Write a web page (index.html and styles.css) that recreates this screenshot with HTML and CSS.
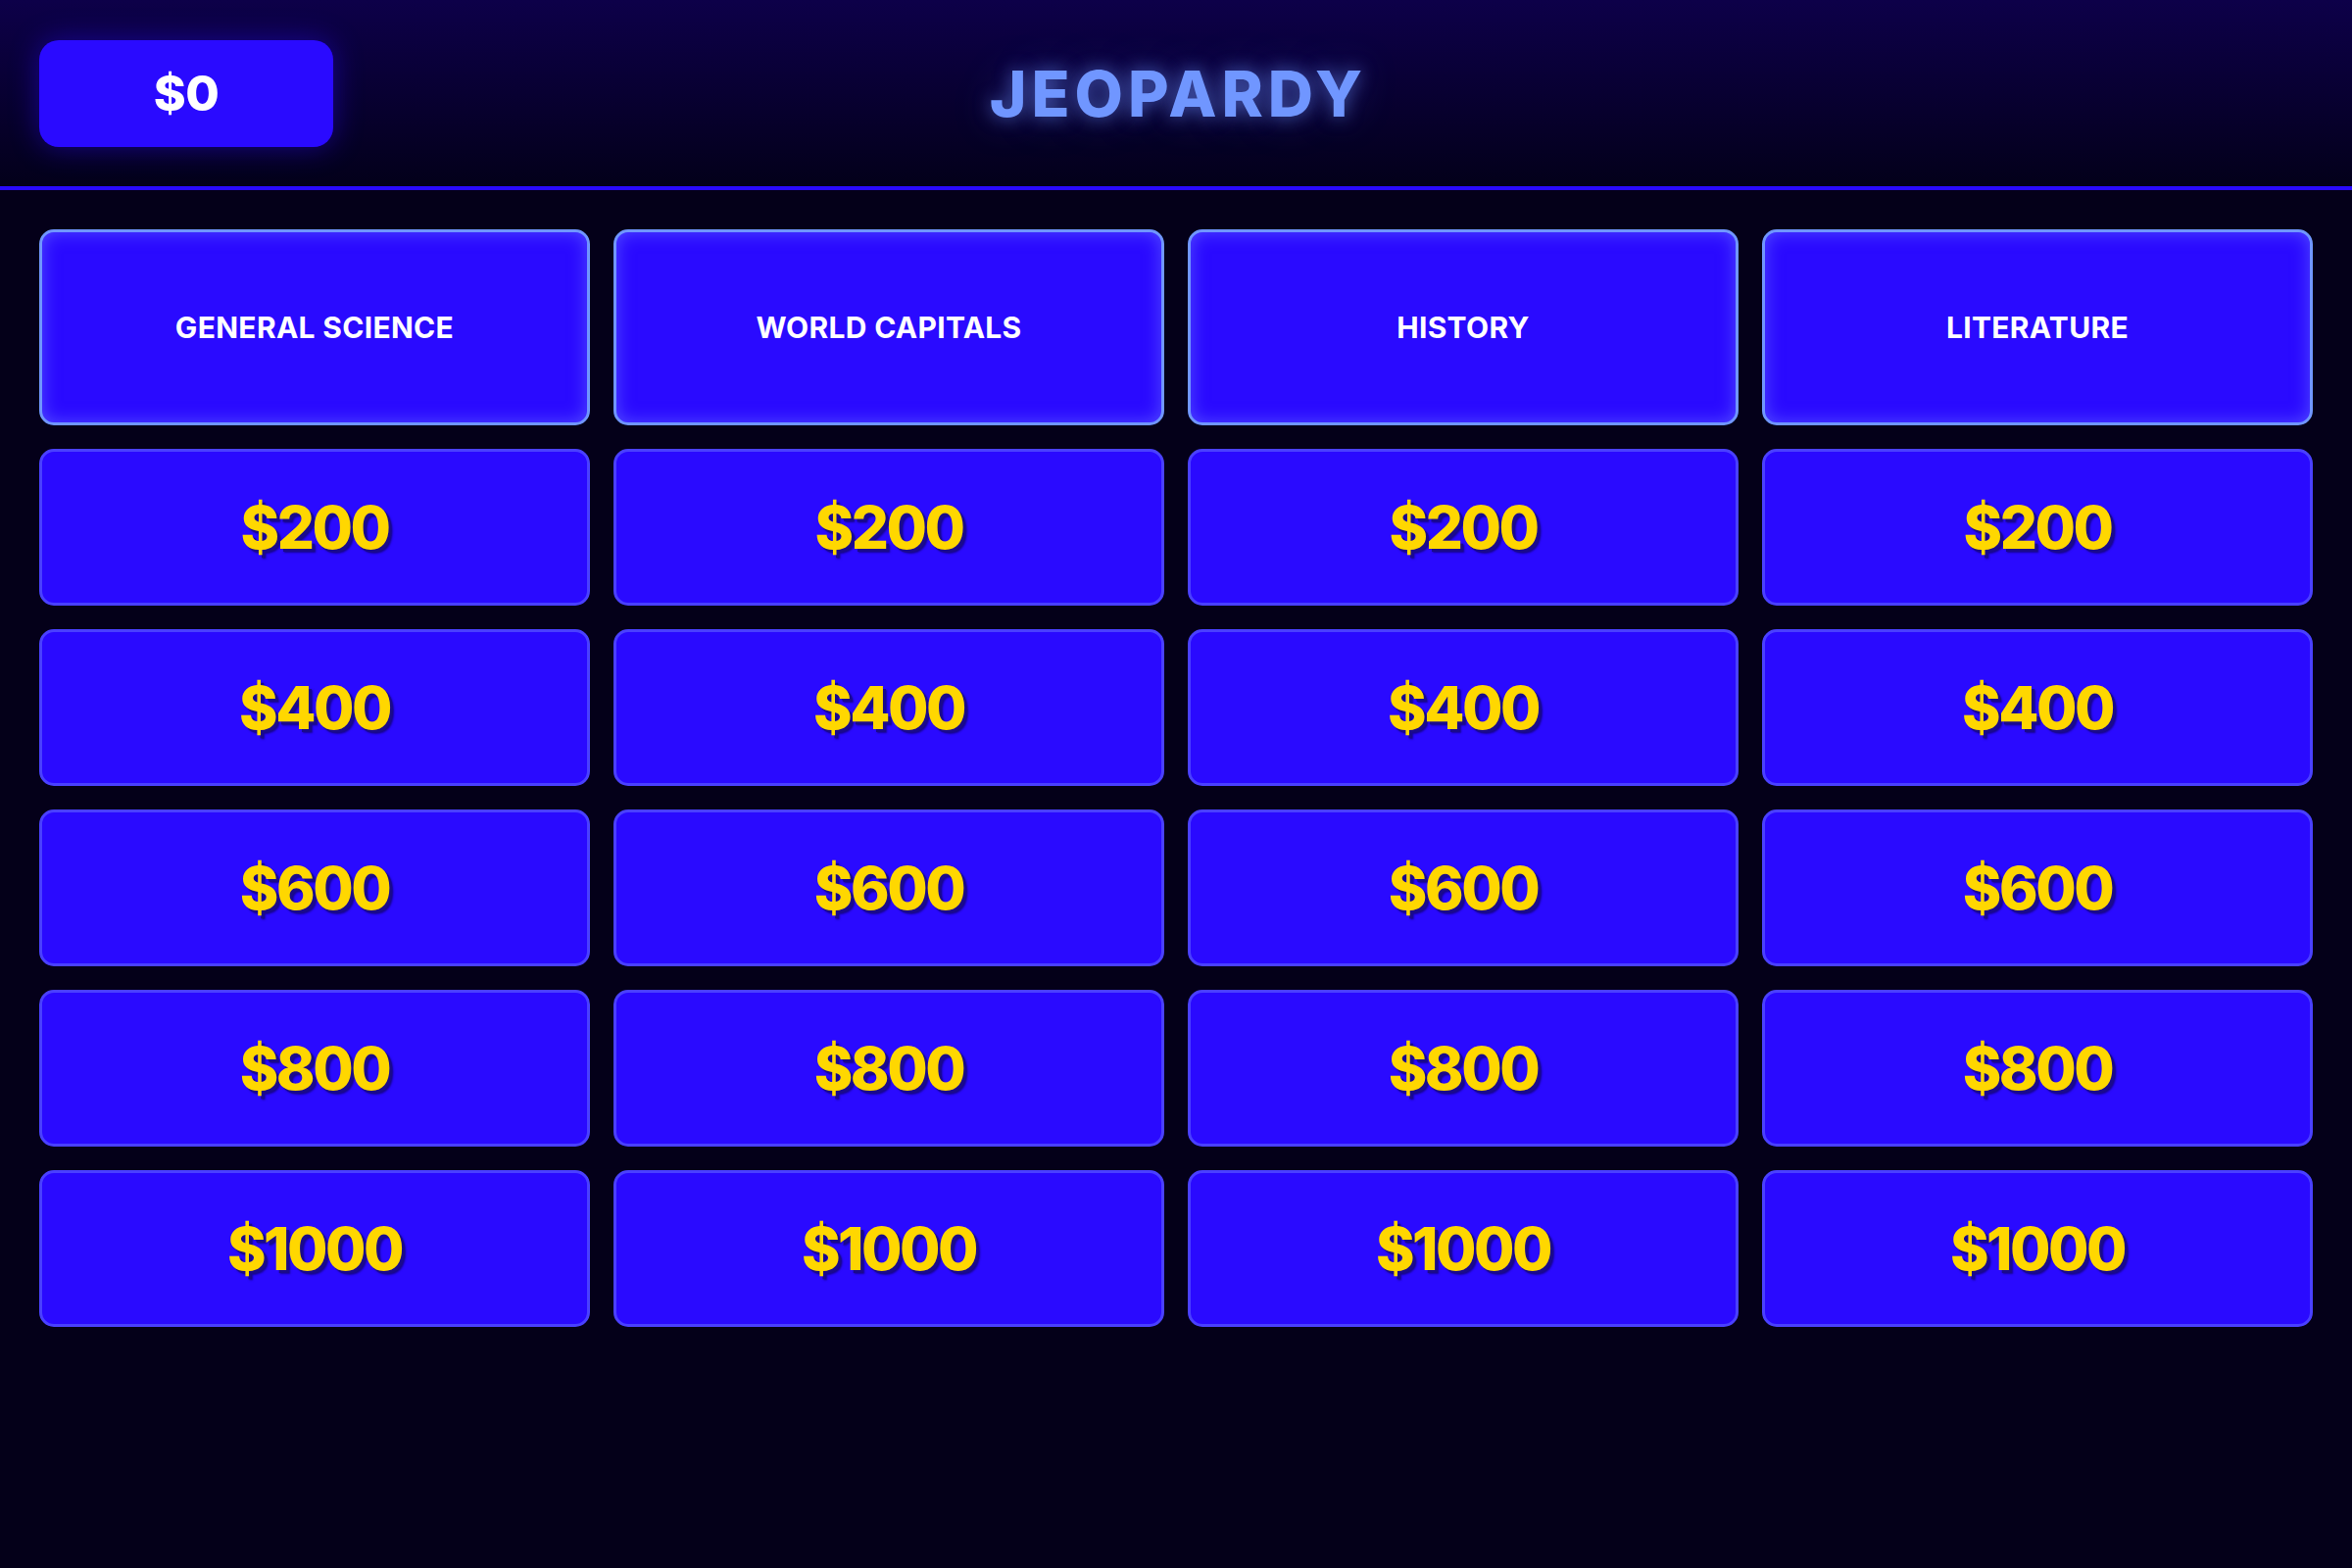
FILE: index.html
```html
<!DOCTYPE html>
<html lang="en">
<head>
<meta charset="utf-8">
<title>Jeopardy</title>
<link rel="stylesheet" href="styles.css">
</head>
<body>
<header class="topbar">
  <div class="score">$0</div>
  <h1 class="title">JEOPARDY</h1>
  <div class="spacer"></div>
</header>
<main class="board">
  <div class="cat">GENERAL SCIENCE</div>
  <div class="cat">WORLD CAPITALS</div>
  <div class="cat">HISTORY</div>
  <div class="cat">LITERATURE</div>

  <div class="clue">$200</div>
  <div class="clue">$200</div>
  <div class="clue">$200</div>
  <div class="clue">$200</div>

  <div class="clue">$400</div>
  <div class="clue">$400</div>
  <div class="clue">$400</div>
  <div class="clue">$400</div>

  <div class="clue">$600</div>
  <div class="clue">$600</div>
  <div class="clue">$600</div>
  <div class="clue">$600</div>

  <div class="clue">$800</div>
  <div class="clue">$800</div>
  <div class="clue">$800</div>
  <div class="clue">$800</div>

  <div class="clue">$1000</div>
  <div class="clue">$1000</div>
  <div class="clue">$1000</div>
  <div class="clue">$1000</div>
</main>
</body>
</html>
```

FILE: styles.css
```css
* { box-sizing: border-box; }

html, body {
  margin: 0;
  padding: 0;
}

body {
  background: #040019;
  min-height: 1600px;
  font-family: Inter, "Noto Sans", "DejaVu Sans", sans-serif;
  color: #ffffff;
}

.topbar {
  height: 194px;
  padding: 0 40px;
  display: grid;
  grid-template-columns: 1fr auto 1fr;
  align-items: center;
  background: linear-gradient(180deg, #0d0049 0%, #080032 50%, #03001a 100%);
  border-bottom: 4px solid #2a0aff;
}

.score {
  justify-self: start;
  width: 300px;
  height: 109px;
  border-radius: 20px;
  background: #2a0aff;
  box-shadow: 0 0 30px rgba(42, 10, 255, 0.45);
  display: flex;
  align-items: center;
  justify-content: center;
  font-size: 50px;
  font-weight: 800;
  letter-spacing: -0.5px;
  color: #ffffff;
}

.title {
  margin: 0;
  font-size: 64px;
  font-weight: 800;
  letter-spacing: 5px;
  padding-left: 5px;
  color: #7096ff;
  text-shadow: 0 0 18px rgba(112, 150, 255, 0.55), 0 0 40px rgba(90, 110, 255, 0.35);
}

.board {
  padding: 40px;
  display: grid;
  grid-template-columns: repeat(4, 1fr);
  grid-template-rows: 200px repeat(5, 160px);
  gap: 24px;
}

.cat {
  background: #2a0aff;
  border: 3px solid #7096ff;
  border-radius: 15px;
  box-shadow: inset 0 0 18px rgba(110, 120, 255, 0.6);
  display: flex;
  align-items: center;
  justify-content: center;
  font-size: 30px;
  font-weight: 700;
  letter-spacing: 0.3px;
  color: #ffffff;
}

.clue {
  background: #2a0aff;
  border: 3px solid #4a40ff;
  border-radius: 15px;
  display: flex;
  align-items: center;
  justify-content: center;
  font-size: 60px;
  font-weight: 800;
  letter-spacing: -2.5px;
  color: #ffd700;
  text-shadow: 3px 3px 0 #1a0a8c, 4px 4px 2px rgba(10, 0, 80, 0.6);
}
```
